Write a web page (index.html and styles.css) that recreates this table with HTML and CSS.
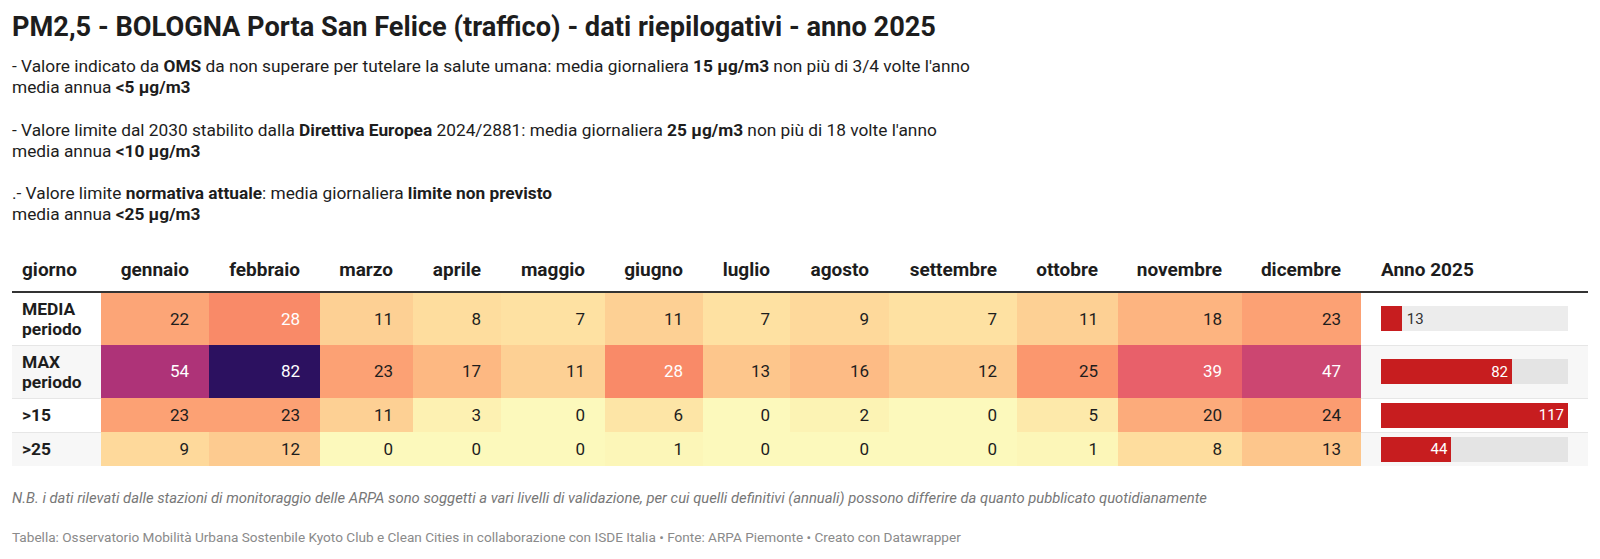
FILE: index.html
```html
<!DOCTYPE html>
<html lang="it">
<head>
<meta charset="utf-8">
<title>PM2,5 - BOLOGNA Porta San Felice</title>
<link rel="stylesheet" href="styles.css">
</head>
<body>
<h1 class="title">PM2,5 - BOLOGNA Porta San Felice (traffico) - dati riepilogativi - anno 2025</h1>
<div class="desc">
- Valore indicato da <b>OMS</b> da non superare per tutelare la salute umana: media giornaliera <b>15 µg/m3</b> non più di 3/4 volte l'anno<br>
media annua <b>&lt;5 µg/m3</b><br><br>
- Valore limite dal 2030 stabilito dalla <b>Direttiva Europea</b> 2024/2881: media giornaliera <b>25 µg/m3</b> non più di 18 volte l'anno<br>
media annua <b>&lt;10 µg/m3</b><br><br>
.- Valore limite <b>normativa attuale</b>: media giornaliera <b>limite non previsto</b><br>
media annua <b>&lt;25 µg/m3</b>
</div>

<table class="heat">
<colgroup>
<col class="w-lab"><col class="w-gen"><col class="w-feb"><col class="w-mar"><col class="w-apr"><col class="w-mag"><col class="w-giu"><col class="w-lug"><col class="w-ago"><col class="w-set"><col class="w-ott"><col class="w-nov"><col class="w-dic"><col class="w-anno">
</colgroup>
<thead>
<tr>
<th class="lab">giorno</th><th>gennaio</th><th>febbraio</th><th>marzo</th><th>aprile</th><th>maggio</th><th>giugno</th><th>luglio</th><th>agosto</th><th>settembre</th><th>ottobre</th><th>novembre</th><th>dicembre</th><th class="anno">Anno 2025</th>
</tr>
</thead>
<tbody>
<tr>
<td class="lab">MEDIA<br>periodo</td>
<td style="background:#fca577">22</td>
<td class="lt" style="background:#f98a68">28</td>
<td style="background:#fdd094">11</td>
<td style="background:#fedd9e">8</td>
<td style="background:#fee1a2">7</td>
<td style="background:#fdd094">11</td>
<td style="background:#fee1a2">7</td>
<td style="background:#fed99b">9</td>
<td style="background:#fee1a2">7</td>
<td style="background:#fdd094">11</td>
<td style="background:#fdb480">18</td>
<td style="background:#fca174">23</td>
<td class="anno"><div class="track"><div class="bar" style="width:11.11%"></div><span class="out">13</span></div></td>
</tr>
<tr class="alt">
<td class="lab">MAX<br>periodo</td>
<td class="lt" style="background:#ae3378">54</td>
<td class="lt" style="background:#2c1160">82</td>
<td style="background:#fca174">23</td>
<td style="background:#fdb882">17</td>
<td style="background:#fdd094">11</td>
<td class="lt" style="background:#f98a68">28</td>
<td style="background:#fdc68c">13</td>
<td style="background:#fdbb85">16</td>
<td style="background:#fdcb90">12</td>
<td style="background:#fb976e">25</td>
<td class="lt" style="background:#e8606a">39</td>
<td class="lt" style="background:#cc4671">47</td>
<td class="anno"><div class="track"><div class="bar" style="width:70.09%"><span class="in">82</span></div></div></td>
</tr>
<tr>
<td class="lab">&gt;15</td>
<td style="background:#fca174">23</td>
<td style="background:#fca174">23</td>
<td style="background:#fdd094">11</td>
<td style="background:#fdf1b2">3</td>
<td style="background:#fcf9bc">0</td>
<td style="background:#fde5a6">6</td>
<td style="background:#fcf9bc">0</td>
<td style="background:#fcf3b4">2</td>
<td style="background:#fcf9bc">0</td>
<td style="background:#fde9aa">5</td>
<td style="background:#fcab7b">20</td>
<td style="background:#fb9c71">24</td>
<td class="anno"><div class="track"><div class="bar" style="width:100%"><span class="in">117</span></div></div></td>
</tr>
<tr class="alt">
<td class="lab">&gt;25</td>
<td style="background:#fed99b">9</td>
<td style="background:#fdcb90">12</td>
<td style="background:#fcf9bc">0</td>
<td style="background:#fcf9bc">0</td>
<td style="background:#fcf9bc">0</td>
<td style="background:#fcf6b8">1</td>
<td style="background:#fcf9bc">0</td>
<td style="background:#fcf9bc">0</td>
<td style="background:#fcf9bc">0</td>
<td style="background:#fcf6b8">1</td>
<td style="background:#fedd9e">8</td>
<td style="background:#fdc68c">13</td>
<td class="anno"><div class="track"><div class="bar" style="width:37.61%"><span class="in">44</span></div></div></td>
</tr>
</tbody>
</table>

<p class="note">N.B. i dati rilevati dalle stazioni di monitoraggio delle ARPA sono soggetti a vari livelli di validazione, per cui quelli definitivi (annuali) possono differire da quanto pubblicato quotidianamente</p>
<p class="source">Tabella: Osservatorio Mobilità Urbana Sostenbile Kyoto Club e Clean Cities in collaborazione con ISDE Italia • Fonte: ARPA Piemonte • Creato con Datawrapper</p>
</body>
</html>
```

FILE: styles.css
```css
html, body {
  margin: 0;
  background: #ffffff;
}
body {
  padding: 12px 12px 0 12px;
  font-family: Roboto, "Liberation Sans", sans-serif;
  color: #1d1d1d;
}
.title {
  margin: 0;
  font-size: 27.2px;
  line-height: 31px;
  font-weight: 700;
  color: #1d1d1d;
}
.desc {
  margin-top: 13px;
  font-size: 17.3px;
  line-height: 21.2px;
  color: #1d1d1d;
}
.desc b { font-weight: 700; }

.heat {
  margin-top: 24px;
  width: 100%;
  table-layout: fixed;
  border-collapse: separate;
  border-spacing: 0;
  font-size: 17px;
  line-height: 20px;
}
.w-lab { width: 89px; }
.w-gen { width: 108px; }
.w-feb { width: 111px; }
.w-mar { width: 93px; }
.w-apr { width: 88px; }
.w-mag { width: 104px; }
.w-giu { width: 98px; }
.w-lug { width: 87px; }
.w-ago { width: 99px; }
.w-set { width: 128px; }
.w-ott { width: 101px; }
.w-nov { width: 124px; }
.w-dic { width: 119px; }
.w-anno { width: 227px; }

.heat th {
  font-size: 19px;
  font-weight: 700;
  text-align: right;
  padding: 10px 20px 11px 0;
  border-bottom: 2px solid #333333;
  white-space: nowrap;
}
.heat th.lab { text-align: left; padding-left: 10px; }
.heat th.anno { text-align: left; padding-left: 20px; }

.heat td {
  text-align: right;
  padding: 6px 20px 6px 0;
  color: #1d1d1d;
  vertical-align: middle;
}
.heat td.lt { color: #ffffff; }
.heat td.lab {
  text-align: left;
  font-weight: 700;
  font-size: 17.4px;
  padding-left: 10px;
}
.heat tbody tr + tr td.lab,
.heat tbody tr + tr td.anno {
  border-top: 1px solid #e6e6e6;
}
.heat tr.alt td.lab,
.heat tr.alt td.anno {
  background: #f7f7f7;
}
.heat td.anno {
  padding: 4px 20px 4px 20px;
  text-align: left;
}
.track {
  display: flex;
  align-items: center;
  height: 25px;
  background: rgba(0, 0, 0, 0.075);
}
.bar {
  height: 100%;
  background: #c71d1f;
  display: flex;
  align-items: center;
  justify-content: flex-end;
  box-sizing: border-box;
}
.bar .in {
  color: #ffffff;
  font-size: 15px;
  padding-right: 4px;
}
.track .out {
  color: #333333;
  font-size: 15px;
  margin-left: 5px;
}

.note {
  margin: 22px 0 0 0;
  font-size: 14.8px;
  line-height: 20px;
  font-style: italic;
  color: #777777;
}
.source {
  margin: 21px 0 0 0;
  font-size: 13.6px;
  line-height: 16px;
  color: #8a8a8a;
}
```
